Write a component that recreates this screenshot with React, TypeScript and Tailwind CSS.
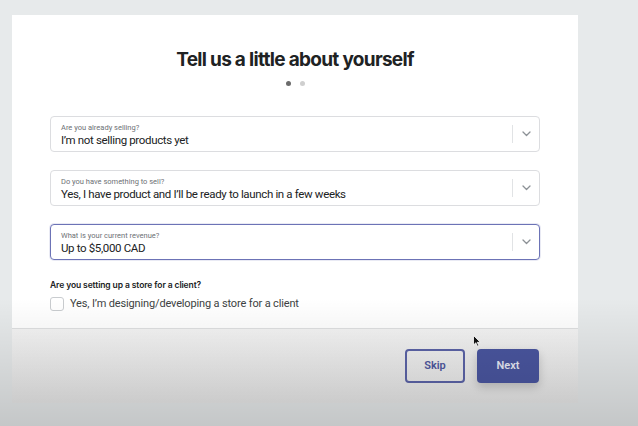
const fields = [
  { label: "Are you already selling?", value: "I’m not selling products yet", active: false },
  {
    label: "Do you have something to sell?",
    value: "Yes, I have product and I’ll be ready to launch in a few weeks",
    active: false,
  },
  { label: "What is your current revenue?", value: "Up to $5,000 CAD", active: true },
];

function Chevron() {
  return (
    <svg width="9" height="6" viewBox="0 0 9 6" fill="none">
      <path d="M1 1l3.5 3.5L8 1" stroke="#8c9196" strokeWidth="1.3" strokeLinecap="round" strokeLinejoin="round" />
    </svg>
  );
}

function SelectField({ label, value, active }: { label: string; value: string; active: boolean }) {
  return (
    <div
      className={
        active
          ? "h-[36px] w-full rounded-[4px] border-[1.5px] border-[#6c73b6] bg-white flex items-center shadow-[0_0_0_1px_rgba(108,115,182,0.15)]"
          : "h-[36px] w-full rounded-[4px] border border-[#dcdde0] bg-white flex items-center"
      }
    >
      <div className="flex-1 pl-[10px] pt-[2px] flex flex-col leading-none">
        <span className="text-[7.5px] text-[#6d7175] mb-[4px]">{label}</span>
        <span className="text-[11.5px] tracking-[-0.35px] text-[#202223]">{value}</span>
      </div>
      <div className="h-[18px] w-px bg-[#e1e3e5]" />
      <div className="w-[26px] flex justify-center">
        <Chevron />
      </div>
    </div>
  );
}

export default function App() {
  return (
    <div
      className="relative w-[638px] h-[426px] overflow-hidden bg-[#e7eaeb] pl-[12px] pt-[15px]"
      style={{ fontFamily: "Roboto, 'Noto Sans', sans-serif" }}
    >
      <div className="w-[566px] h-[388px] bg-white flex flex-col">
        <div className="h-[313px] flex flex-col items-center pt-[31px]">
          <h1
            className="text-[19px] leading-[28px] font-bold tracking-[-0.7px] text-[#202223]"
            style={{ fontFamily: "Inter, sans-serif" }}
          >
            Tell us a little about yourself
          </h1>
          <div className="mt-[7px] flex gap-[9px]">
            <span className="w-[5px] h-[5px] rounded-full bg-[#6b6b6b]" />
            <span className="w-[5px] h-[5px] rounded-full bg-[#cfcfcf]" />
          </div>

          <div className="mt-[30px] w-[490px] flex flex-col gap-[18px]">
            {fields.map((f) => (
              <SelectField key={f.label} {...f} />
            ))}
          </div>

          <div className="w-[490px] mt-[19px]">
            <p
              className="text-[8.5px] font-semibold text-[#202223] tracking-[-0.1px]"
              style={{ fontFamily: "Inter, sans-serif" }}
            >
              Are you setting up a store for a client?
            </p>
            <label className="mt-[4px] flex items-center gap-[6px]">
              <span className="w-[14px] h-[14px] rounded-[3px] border border-[#c9cccf] bg-white" />
              <span className="text-[11px] tracking-[-0.15px] text-[#3d3f42]">
                Yes, I’m designing/developing a store for a client
              </span>
            </label>
          </div>
        </div>

        <div className="flex-1 border-t border-[#dfe0e1] bg-gradient-to-b from-[#f4f4f4] to-[#e8e8e8] flex items-center justify-end gap-[12px] pr-[39px]">
          <button className="w-[60px] h-[34px] rounded-[4px] border-2 border-[#5c64a8] bg-transparent text-[11px] font-semibold text-[#4f58a0]">
            Skip
          </button>
          <button className="w-[62px] h-[34px] rounded-[4px] bg-[#4a56a0] text-[11px] font-semibold text-[#e8eaf6] shadow-[0_4px_10px_rgba(0,0,0,0.18)]">
            Next
          </button>
        </div>
      </div>

      {/* vignette from the recording */}
      <div className="pointer-events-none absolute inset-0 bg-gradient-to-b from-transparent via-transparent via-70% to-black/15" />

      {/* mouse cursor */}
      <svg className="absolute left-[473px] top-[335px]" width="8" height="12" viewBox="0 0 8 12">
        <path d="M0.5 0.5v9.5l2.3-2.2 1.6 3.4 1.4-.6-1.6-3.3h3.1z" fill="#111" stroke="#fff" strokeWidth="0.8" />
      </svg>
    </div>
  );
}
